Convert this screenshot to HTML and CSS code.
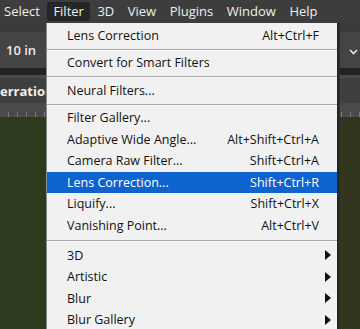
FILE: index.html
```html
<!DOCTYPE html>
<html lang="en">
<head>
    <meta charset="UTF-8" />
    <meta name="viewport" content="width=device-width, initial-scale=1.0" />
    <link rel="stylesheet" href="styles.css">
    <title>Filter Menu</title>
</head>
<body>
    <div class="app">
        <div class="menubar">
            <span class="menu-title first">Select</span>
            <span class="menu-title open">Filter</span>
            <span class="menu-title">3D</span>
            <span class="menu-title">View</span>
            <span class="menu-title">Plugins</span>
            <span class="menu-title">Window</span>
            <span class="menu-title">Help</span>
        </div>
        <div class="optbar">
            <div class="opt-field">10 in</div>
            <div class="opt-chevron">
                <svg width="9" height="6" viewBox="0 0 9 6"><path d="M1 1 L4.5 4.5 L8 1" fill="none" stroke="#e6e6e6" stroke-width="1.6"/></svg>
            </div>
        </div>
        <div class="strip"></div>
        <div class="tabs">
            <span class="tab">erration</span>
        </div>
        <div class="ruler"></div>
        <div class="canvas"></div>
    </div>

    <div class="dropdown">
        <div class="item"><span>Lens Correction</span><span class="key">Alt+Ctrl+F</span></div>
        <div class="sep"></div>
        <div class="item"><span>Convert for Smart Filters</span></div>
        <div class="sep"></div>
        <div class="item"><span>Neural Filters...</span></div>
        <div class="sep"></div>
        <div class="item"><span>Filter Gallery...</span></div>
        <div class="item"><span>Adaptive Wide Angle...</span><span class="key">Alt+Shift+Ctrl+A</span></div>
        <div class="item"><span>Camera Raw Filter...</span><span class="key">Shift+Ctrl+A</span></div>
        <div class="item active"><span>Lens Correction...</span><span class="key">Shift+Ctrl+R</span></div>
        <div class="item"><span>Liquify...</span><span class="key">Shift+Ctrl+X</span></div>
        <div class="item"><span>Vanishing Point...</span><span class="key">Alt+Ctrl+V</span></div>
        <div class="sep last"></div>
        <div class="item sub"><span>3D</span><span class="arrow"></span></div>
        <div class="item sub"><span>Artistic</span><span class="arrow"></span></div>
        <div class="item sub"><span>Blur</span><span class="arrow"></span></div>
        <div class="item sub"><span>Blur Gallery</span><span class="arrow"></span></div>
    </div>
</body>
</html>
```

FILE: styles.css
```css
* {
    box-sizing: border-box;
    margin: 0;
    padding: 0;
}
body {
    width: 360px;
    height: 329px;
    overflow: hidden;
    position: relative;
    background-color: #2c3a1d;
    font-family: "Open Sans", "Noto Sans", sans-serif;
}
.app {
    display: flex;
    flex-direction: column;
    height: 329px;
}
.menubar {
    height: 23px;
    background-color: #3d3d3d;
    display: flex;
    align-items: center;
    gap: 1.5px;
    color: #efefef;
    font-size: 13px;
}
.menu-title {
    padding: 0 6px;
    height: 19px;
    line-height: 19px;
    border-radius: 2px;
}
.menu-title.first {
    padding-left: 4px;
}
.menu-title.open {
    background-color: #262626;
}
.optbar {
    height: 45px;
    background-color: #444444;
    border-top: 9px solid #3a3a3a;
    display: flex;
    align-items: center;
    justify-content: space-between;
    padding: 0 2px 0 6px;
}
.opt-field {
    color: #ececec;
    font-size: 13px;
    font-weight: 600;
}
.opt-chevron {
    display: flex;
    margin-top: 3px;
}
.strip {
    height: 10px;
    background-color: #232323;
    border-bottom: 3px solid #4a4a4a;
}
.tabs {
    height: 25px;
    background-color: #3f3f3f;
    display: flex;
    align-items: center;
}
.tab {
    color: #f0f0f0;
    font-size: 13px;
    font-weight: 700;
    padding-top: 1px;
}
.ruler {
    height: 14px;
    background-color: #4a4a4a;
    background-image: repeating-linear-gradient(90deg, transparent 0 8px, #7a7a7a 8px 9px);
    background-size: 100% 5px;
    background-position: 0 bottom;
    background-repeat: no-repeat;
}
.canvas {
    flex: 1;
    background: linear-gradient(90deg, #2d3a1e, #2a3a1c 60%, #33361f);
}
.dropdown {
    position: absolute;
    left: 46px;
    top: 23px;
    width: 291px;
    height: 320px;
    background-color: #f1f1f1;
    border-left: 1px solid #8a8a8a;
    box-shadow: 2px 0 0 #262626, 3px 0 0 #2e2e2e;
    padding-top: 1.5px;
    color: #111;
    font-size: 12.5px;
}
.item {
    height: 21.5px;
    display: flex;
    align-items: center;
    justify-content: space-between;
    padding: 0 18px 0 20px;
}
.item.active {
    background-color: #0f63cf;
    color: #fff;
}
.item.sub {
    padding-right: 6px;
}
.arrow {
    width: 0;
    height: 0;
    border-top: 5px solid transparent;
    border-bottom: 5px solid transparent;
    border-left: 6px solid #111;
}
.sep {
    height: 6px;
    display: flex;
    align-items: center;
}
.sep::before {
    content: "";
    flex: 1;
    height: 1px;
    background-color: #a9a9a9;
    box-shadow: 0 1px 0 #fafafa;
}
.sep.last {
    height: 8.5px;
}
```
